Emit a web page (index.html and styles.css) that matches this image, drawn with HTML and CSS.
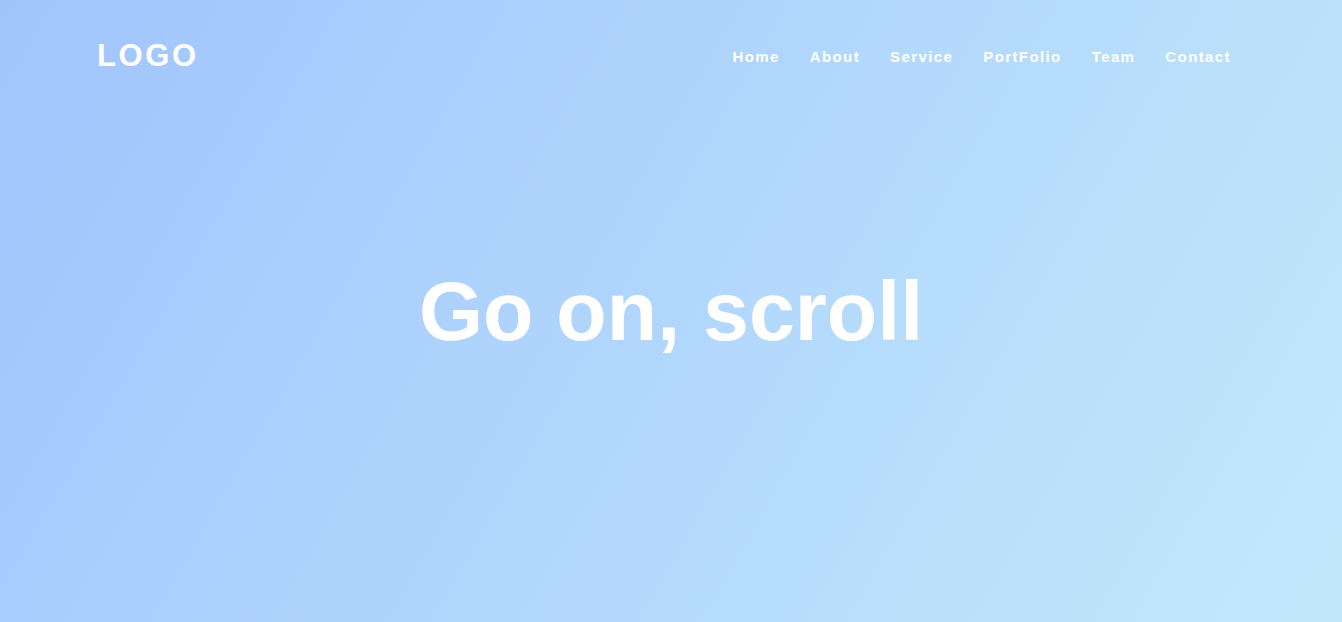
FILE: index.html
```html
<!DOCTYPE html>
<html lang="en">
<head>
<meta charset="utf-8">
<title>Go on, scroll</title>
<link rel="stylesheet" href="styles.css">
</head>
<body>
<div class="page">
  <header class="header">
    <a class="logo" href="#">LOGO</a>
    <nav class="nav">
      <a href="#">Home</a>
      <a href="#">About</a>
      <a href="#">Service</a>
      <a href="#">PortFolio</a>
      <a href="#">Team</a>
      <a href="#">Contact</a>
    </nav>
  </header>
  <main class="hero">
    <h1 class="title">Go on, scroll</h1>
  </main>
</div>
</body>
</html>
```
FILE: styles.css
```css
* { box-sizing: border-box; }
html, body { margin: 0; padding: 0; height: 100%; }
body {
  font-family: "Liberation Sans", Arial, sans-serif;
  color: #fff;
  overflow: hidden;
}
.page {
  position: relative;
  height: 100vh;
  background-image: linear-gradient(120deg, #a1c4fd 0%, #c2e9fb 100%);
  display: flex;
  flex-direction: column;
}
.header {
  position: absolute;
  top: 0; left: 0; right: 0;
  height: 112px;
  padding: 0 96px 0 97px;
  display: flex;
  align-items: center;
  justify-content: space-between;
}
.logo {
  color: #fff;
  text-decoration: none;
  font-weight: 700;
  font-size: 31px;
  letter-spacing: 2.6px;
}
.nav { display: flex; }
.nav a {
  color: #fff;
  text-decoration: none;
  font-weight: 700;
  font-size: 15px;
  letter-spacing: 1.4px;
  padding: 0 15px;
}
.hero {
  flex: 1;
  display: flex;
  align-items: center;
  justify-content: center;
}
.title {
  margin: 0;
  font-size: 82.5px;
  font-weight: 700;
  line-height: 1;
}
```
